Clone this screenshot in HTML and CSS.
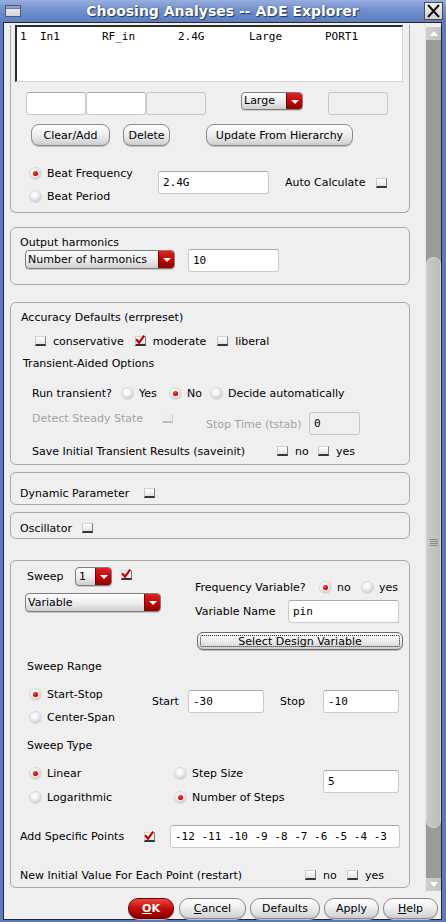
FILE: index.html
```html
<!DOCTYPE html>
<html>
<head>
<meta charset="utf-8">
<title>Choosing Analyses -- ADE Explorer</title>
<link rel="stylesheet" href="styles.css">
</head>
<body>
<div class="win">
  <div class="titlebar">
    <span class="ticon"><span class="ticon-bar"></span></span>
    <span class="ttext">Choosing Analyses -- ADE Explorer</span>
    <span class="tclose"><svg width="17" height="16" viewBox="0 0 17 16"><path d="M3 2 L14 14 M14 2 L3 14" stroke="#111" stroke-width="2" fill="none"/></svg></span>
  </div>
  <div class="frame">
    <div class="scrollarea">
      <div class="main">
        <!-- section 1 -->
        <div class="sec s1">
          <div class="listbox">
            <div class="lrow"><span class="c1">1</span><span class="c2">In1</span><span class="c3">RF_in</span><span class="c4">2.4G</span><span class="c5">Large</span><span class="c6">PORT1</span></div>
          </div>
          <div class="frow">
            <span class="tf w60 ml15"></span><span class="tf w60"></span><span class="tf w60 dis"></span>
            <span class="dd dd-large"><span class="v">Large</span><span class="ar"></span></span>
            <span class="tf w60 dis ml25"></span>
          </div>
          <div class="brow">
            <span class="btn b-clear">Clear/Add</span>
            <span class="btn b-delete">Delete</span>
            <span class="btn b-update">Update From Hierarchy</span>
          </div>
          <div class="beat">
            <div class="rcol beat-col">
              <span class="radio"><span class="rb on"></span>Beat Frequency</span>
              <span class="radio"><span class="rb"></span>Beat Period</span>
            </div>
            <span class="tf beat-f">2.4G</span>
            <span class="auto">Auto Calculate<span class="cb ml11"></span></span>
          </div>
        </div>

        <!-- section 2 -->
        <div class="sec s2">
          <div class="lbl oh-lbl">Output harmonics</div>
          <div class="oh-row">
            <span class="dd dd-harm"><span class="v">Number of harmonics</span><span class="ar"></span></span>
            <span class="tf oh-f">10</span>
          </div>
        </div>

        <!-- section 3 -->
        <div class="sec s3">
          <div class="lbl acc-lbl">Accuracy Defaults (errpreset)</div>
          <div class="cbrow">
            <span class="chk"><span class="cb"></span>conservative</span>
            <span class="chk ml11"><span class="cb on"><svg viewBox="0 0 10 10"><path d="M1.2 4.2 L4 7.6 L9.2 0.6" fill="none" stroke="#c80000" stroke-width="2.2"/></svg></span>moderate</span>
            <span class="chk ml11"><span class="cb"></span>liberal</span>
          </div>
          <div class="lbl ta-lbl">Transient-Aided Options</div>
          <div class="run-row">
            <span class="run-lbl">Run transient?</span>
            <span class="radio w48"><span class="rb"></span>Yes</span>
            <span class="radio w41"><span class="rb on"></span>No</span>
            <span class="radio"><span class="rb"></span>Decide automatically</span>
          </div>
          <div class="det-row">
            <span class="det-lbl gray">Detect Steady State</span>
            <span class="cb dis det-cb"></span>
            <span class="stop-lbl gray">Stop Time (tstab)</span>
            <span class="tf dis stop-f">0</span>
          </div>
          <div class="save-row">
            <span class="save-lbl">Save Initial Transient Results (saveinit)</span>
            <span class="chk w41"><span class="cb"></span>no</span>
            <span class="chk"><span class="cb"></span>yes</span>
          </div>
        </div>

        <!-- section 4 -->
        <div class="sec s4">
          <div class="one-row dyn"><span class="dyn-lbl">Dynamic Parameter</span><span class="cb"></span></div>
        </div>

        <!-- section 5 -->
        <div class="sec s5">
          <div class="one-row osc"><span class="osc-lbl">Oscillator</span><span class="cb"></span></div>
        </div>

        <!-- section 6 -->
        <div class="sec s6">
          <div class="top6">
            <div class="sw-left">
              <div class="sw-row">
                <span class="sw-lbl">Sweep</span>
                <span class="dd dd-one"><span class="v">1</span><span class="ar"></span></span>
                <span class="cb on sw-cb"><svg viewBox="0 0 10 10"><path d="M1.2 4.2 L4 7.6 L9.2 0.6" fill="none" stroke="#c80000" stroke-width="2.2"/></svg></span>
              </div>
              <span class="dd dd-var"><span class="v">Variable</span><span class="ar"></span></span>
            </div>
            <div class="sw-right">
              <div class="fv-row">
                <span class="fv-lbl">Frequency Variable?</span>
                <span class="radio w42"><span class="rb on"></span>no</span>
                <span class="radio"><span class="rb"></span>yes</span>
              </div>
              <div class="vn-row">
                <span class="vn-lbl">Variable Name</span>
                <span class="tf vn-f">pin</span>
              </div>
              <span class="btn sdv"><span class="sdv-in">Select Design Variable</span></span>
            </div>
          </div>

          <div class="lbl sub-lbl sr-lbl">Sweep Range</div>
          <div class="range">
            <div class="rcol range-col">
              <span class="radio"><span class="rb on"></span>Start-Stop</span>
              <span class="radio"><span class="rb"></span>Center-Span</span>
            </div>
            <div class="ss-group">
              <span class="start-lbl">Start</span>
              <span class="tf w76">-30</span>
              <span class="stop2-lbl">Stop</span>
              <span class="tf w76">-10</span>
            </div>
          </div>

          <div class="lbl sub-lbl st-lbl">Sweep Type</div>
          <div class="stype">
            <div class="rcol type-col1">
              <span class="radio"><span class="rb on"></span>Linear</span>
              <span class="radio"><span class="rb"></span>Logarithmic</span>
            </div>
            <div class="rcol type-col2">
              <span class="radio"><span class="rb"></span>Step Size</span>
              <span class="radio"><span class="rb on"></span>Number of Steps</span>
            </div>
            <span class="tf w76 steps-f">5</span>
          </div>

          <div class="add-row">
            <span class="add-lbl">Add Specific Points</span>
            <span class="cb on"><svg viewBox="0 0 10 10"><path d="M1.2 4.2 L4 7.6 L9.2 0.6" fill="none" stroke="#c80000" stroke-width="2.2"/></svg></span>
            <span class="tf add-f">-12 -11 -10 -9 -8 -7 -6 -5 -4 -3</span>
          </div>

          <div class="new-row">
            <span class="new-lbl">New Initial Value For Each Point (restart)</span>
            <span class="chk w42"><span class="cb"></span>no</span>
            <span class="chk"><span class="cb"></span>yes</span>
          </div>
        </div>
      </div>
      <div class="vscroll">
        <div class="sb-btn up"></div>
        <div class="sb-track"><div class="sb-thumb"><span class="grip"></span></div></div>
        <div class="sb-btn down"></div>
      </div>
    </div>
    <div class="btnbar">
      <span class="btn fbtn ok"><u>O</u>K</span>
      <span class="btn fbtn cancel"><u>C</u>ancel</span>
      <span class="btn fbtn defaults">Defaults</span>
      <span class="btn fbtn apply">Apply</span>
      <span class="btn fbtn help"><u>H</u>elp</span>
    </div>
  </div>
</div>
</body>
</html>
```

FILE: styles.css
```css
* { box-sizing: border-box; margin: 0; padding: 0; }
html, body { margin: 0; width: 446px; height: 922px; overflow: hidden; }
body { font: 11px/13px "DejaVu Sans", sans-serif; color: #000; background: #5d7dc2; }

.win { width: 446px; height: 922px; background: #5a7bc1; display: flex; flex-direction: column; }

/* title bar */
.titlebar { height: 22px; flex: none; display: flex; align-items: center;
  background: linear-gradient(#97afdf, #7592cf 40%, #5d7dc0); }
.ticon { width: 16px; height: 12px; margin-left: 5px; border: 1px solid #4d5a78;
  background: linear-gradient(#f0f0f0, #d4d4d4); display: flex; flex-direction: column; }
.ticon-bar { height: 3px; background: #8ea3c8; border-bottom: 1px solid #6d7f9f; }
.ttext { flex: 1; text-align: center; font: bold 14px/22px "DejaVu Sans", sans-serif; color: #fff;
  text-shadow: 1px 1px 1px #26365a, 0 0 1px #3a4a70; }
.tclose { width: 19px; height: 18px; margin-right: 3px; border: 1px solid #4a4a4a;
  background: linear-gradient(#f4f4f4, #d2d2d2); display: flex; align-items: center; justify-content: center; }
.tclose svg { display: block; }

/* frame */
.frame { flex: 1; margin: 0 4px 2px 3px; border: 1px solid #262626; background: #efefef;
  display: flex; flex-direction: column; }
.scrollarea { height: 870px; flex: none; display: flex; }
.main { flex: 1; overflow: hidden; padding-left: 6px; }

/* sections */
.sec { width: 400px; border: 1px solid #a9a9a9; border-radius: 6px; flex: none; }
.s1 { border-top: none; border-radius: 0 0 6px 6px; height: 188px; }
.s2 { margin-top: 14px; height: 58px; }
.s3 { margin-top: 17px; height: 163px; }
.s4 { margin-top: 7px; height: 33px; }
.s5 { margin-top: 7px; height: 27px; }
.s6 { margin-top: 21px; height: 328px; }

.gray { color: #a3a3a3; }
.ml11 { margin-left: 11px; }
.ml15 { margin-left: 15px; }
.ml25 { margin-left: 25px; }
.w41 { width: 41px; }
.w42 { width: 42px; }
.w48 { width: 48px; }
.w60 { width: 60px; }
.w76 { width: 76px; }

/* widgets */
.tf { display: block; height: 23px; flex: none; background: #fff; border: 1px solid #cbcbcb;
  border-top-color: #a9a9a9; border-radius: 3px; padding-left: 4px;
  font: 11px/21px "DejaVu Sans Mono", monospace; white-space: nowrap; overflow: hidden; }
.tf.dis { background: #efefef; border-color: #c6c6c6; }

.dd { display: flex; flex: none; border: 1px solid #7e7e7e; border-radius: 4px; overflow: hidden;
  background: linear-gradient(#fdfdfd, #ececec 55%, #cfcfcf); box-shadow: 0 1px 0 #c9c9c9; }
.dd .v { flex: 1; padding-left: 2px; white-space: nowrap; overflow: hidden; }
.dd .ar { width: 16px; flex: none; display: flex; align-items: center; justify-content: center;
  background: linear-gradient(#e02222, #bf0808 50%, #8f0000); border-left: 1px solid #7a0000; }
.dd .ar::after { content: ""; border-left: 4px solid transparent; border-right: 4px solid transparent;
  border-top: 4px solid #fff; margin-top: 1px; }

.btn { display: flex; flex: none; align-items: center; justify-content: center; white-space: nowrap;
  border: 1px solid #8a8a8a; border-radius: 8px;
  background: linear-gradient(#fefefe, #efefef 45%, #d9d9d9 85%, #cacaca);
  box-shadow: 0 1px 0 #bdbdbd; }

.radio { display: flex; align-items: center; height: 14px; white-space: nowrap; flex: none; }
.rb { position: relative; width: 11px; height: 11px; border-radius: 50%; margin-right: 6px; flex: none;
  background: radial-gradient(circle at 42% 35%, #ffffff 0, #f6f6f6 30%, #d2d2d2 70%, #a9a9a9 100%);
  box-shadow: 0 0 0 1px #d8d8d8; }
.rb.on::after { content: ""; position: absolute; left: 3px; top: 3px; width: 5px; height: 5px; border-radius: 50%;
  background: radial-gradient(circle at 40% 35%, #ff4a4a, #d40000 55%, #6e0000); }

.chk { display: flex; align-items: center; height: 14px; white-space: nowrap; flex: none; }
.cb { display: block; width: 11px; height: 10px; flex: none; margin-right: 7px;
  background: linear-gradient(#ffffff, #e2e2e2);
  border-style: solid; border-width: 1px 1px 2px 1px;
  border-color: #d2d2d2 #7c7c7c #353535 #c9c9c9; }
.chk .cb { margin-right: 7px; }
.auto .cb, .one-row .cb, .det-row .cb, .add-row .cb { margin-right: 0; }
.cb.on svg { display: block; width: 10px; height: 10px; margin: -2px 0 0 -1px; overflow: visible; }
.cb.dis { background: #ececec; border-color: #f2f2f2 #cfcfcf #bdbdbd #f0f0f0; }

/* section 1 */
.listbox { margin: 2px 0 0 4px; width: 388px; height: 57px; background: #fff;
  border-top: 2px solid #2c2c2c; border-left: 2px solid #2c2c2c;
  border-right: 1px solid #d4d4d4; border-bottom: 1px solid #d4d4d4;
  padding: 3px 0 0 3px; font: 11px/13px "DejaVu Sans Mono", monospace; }
.lrow { display: flex; white-space: nowrap; }
.c1 { width: 20px; } .c2 { width: 62px; } .c3 { width: 76px; } .c4 { width: 71px; } .c5 { width: 76px; }

.frow { display: flex; margin-top: 10px; height: 23px; }
.dd-large { margin-left: 35px; width: 62px; height: 18px; line-height: 16px; }
.brow { display: flex; margin-top: 9px; height: 22px; }
.b-clear { margin-left: 20px; width: 79px; }
.b-delete { margin-left: 13px; width: 47px; }
.b-update { margin-left: 36px; width: 147px; }

.beat { display: flex; margin-top: 20px; }
.rcol { display: flex; flex-direction: column; gap: 9px; flex: none; }
.beat-col { margin-left: 19px; width: 128px; }
.beat-f { margin-top: 5px; width: 111px; }
.auto { display: flex; align-items: center; height: 13px; margin: 10px 0 0 16px; white-space: nowrap; }

/* section 2 */
.oh-lbl { margin: 8px 0 0 9px; }
.oh-row { display: flex; }
.dd-harm { margin: 1px 0 0 14px; width: 150px; height: 19px; line-height: 17px; }
.oh-f { margin-left: 13px; width: 91px; }

/* section 3 */
.acc-lbl { margin: 8px 0 0 10px; }
.cbrow { display: flex; margin: 10px 0 0 24px; }
.ta-lbl { margin: 9px 0 0 12px; }
.run-row { display: flex; align-items: center; height: 14px; margin: 16px 0 0 21px; }
.run-lbl { width: 90px; flex: none; }
.det-row { display: flex; align-items: flex-start; height: 23px; margin: 12px 0 0 21px; }
.det-lbl { width: 130px; flex: none; }
.det-cb { margin-top: 1px; }
.stop-lbl { margin: 6px 0 0 33px; width: 103px; flex: none; }
.stop-f { width: 51px; }
.save-row { display: flex; align-items: center; height: 14px; margin: 9px 0 0 21px; }
.save-lbl { width: 245px; flex: none; }

/* sections 4, 5 */
.one-row { display: flex; align-items: center; height: 14px; margin-left: 9px; }
.dyn { margin-top: 13px; }
.dyn-lbl { width: 124px; flex: none; }
.osc { margin-top: 8px; }
.osc-lbl { width: 62px; flex: none; }

/* section 6 */
.top6 { display: flex; }
.sw-left { margin: 6px 0 0 14px; width: 136px; flex: none; display: flex; flex-direction: column; }
.sw-row { display: flex; align-items: center; height: 19px; }
.sw-lbl { margin-left: 2px; width: 48px; flex: none; }
.dd-one { width: 37px; height: 19px; line-height: 17px; }
.dd-one .v { padding-left: 3px; }
.sw-cb { align-self: flex-start; margin: 3px 0 0 9px; }
.dd-var { margin-top: 7px; width: 136px; height: 19px; line-height: 17px; }
.sw-right { margin: 19px 0 0 34px; display: flex; flex-direction: column; }
.fv-row { display: flex; align-items: center; height: 14px; }
.fv-lbl { width: 125px; flex: none; }
.vn-row { display: flex; align-items: center; height: 23px; margin-top: 6px; }
.vn-lbl { width: 93px; flex: none; }
.vn-f { width: 111px; }
.sdv { margin: 9px 0 0 2px; width: 206px; height: 18px; border-radius: 6px; border-color: #6c6c6c; padding: 2px; }
.sdv-in { display: flex; align-items: center; justify-content: center; width: 100%; height: 100%;
  border: 1px dotted #222; border-radius: 2px; }

.sub-lbl { margin-left: 16px; }
.sr-lbl { margin-top: 10px; }
.range { display: flex; margin-top: 14px; }
.range-col { margin-left: 19px; width: 122px; }
.ss-group { display: flex; align-items: center; height: 23px; margin-top: 3px; }
.start-lbl { width: 36px; flex: none; }
.stop2-lbl { margin-left: 16px; width: 43px; flex: none; }

.st-lbl { margin-top: 15px; }
.stype { display: flex; margin-top: 14px; }
.stype .rcol { gap: 10px; }
.type-col1 { margin-left: 19px; width: 145px; }
.type-col2 { width: 148px; }
.steps-f { margin-top: 4px; }

.add-row { display: flex; align-items: center; height: 23px; margin: 21px 0 0 9px; }
.add-lbl { width: 124px; flex: none; }
.add-f { margin-left: 15px; width: 230px; padding-left: 4px; }

.new-row { display: flex; align-items: center; height: 14px; margin: 20px 0 0 9px; }
.new-lbl { width: 285px; flex: none; }

/* scrollbar */
.vscroll { width: 16px; flex: none; border-left: 1px solid #e6e6e6; display: flex; flex-direction: column;
  padding: 4px 0 2px; background: #efefef; }
.sb-btn { height: 13px; flex: none; display: flex; align-items: center; justify-content: center;
  background: linear-gradient(90deg, #cfcfcf, #c2c2c2); }
.sb-btn.up::after { content: ""; border-left: 4px solid transparent; border-right: 4px solid transparent;
  border-bottom: 5px solid #fff; }
.sb-btn.down::after { content: ""; border-left: 4px solid transparent; border-right: 4px solid transparent;
  border-top: 5px solid #fff; }
.sb-track { flex: 1; background: #9b9b9b; display: flex; flex-direction: column; }
.sb-thumb { margin-top: 217px; height: 571px; border-radius: 7px; border: 1px solid #d6d6d6;
  background: linear-gradient(90deg, #c9c9c9, #bdbdbd); display: flex; align-items: center; justify-content: center; }
.grip { width: 8px; height: 7px; background: repeating-linear-gradient(#8a8a8a 0 1px, transparent 1px 2px); }

/* bottom buttons */
.btnbar { display: flex; justify-content: flex-end; gap: 4px; padding: 5px 3px 0 0; }
.fbtn { height: 21px; border-radius: 10px; }
.ok { width: 46px; margin-right: 1px; color: #fff; font-weight: bold; border-color: #6a0000;
  background: linear-gradient(#e84a40, #c81010 45%, #a00000 80%, #8a0000); }
.cancel { width: 67px; }
.defaults { width: 70px; }
.apply { width: 55px; }
.help { width: 55px; }
```
